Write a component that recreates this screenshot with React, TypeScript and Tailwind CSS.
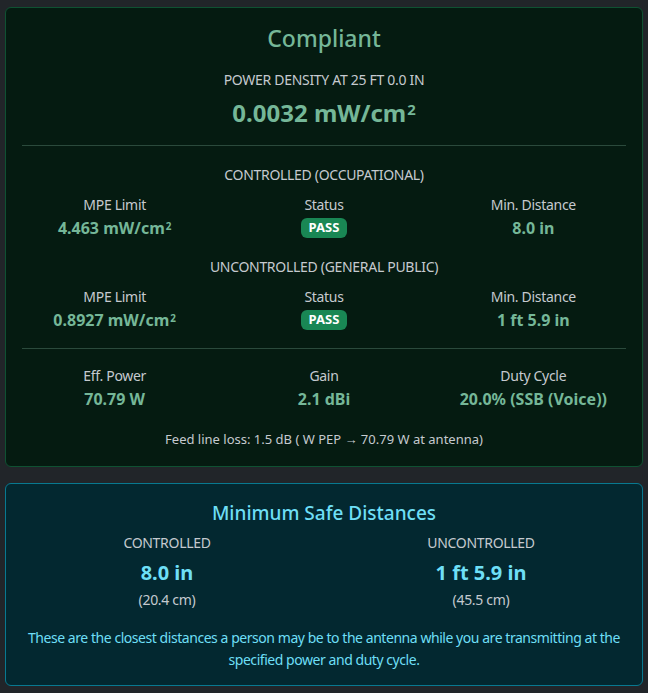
import React from "react";

const font = { fontFamily: '"Noto Sans", "Segoe UI", "Liberation Sans", sans-serif' };

const label = "text-[14px] tracking-[-0.3px] text-[#c5cacf]";

function Stat({ name, value }: { name: string; value: React.ReactNode }) {
  return (
    <div className="flex flex-col items-center px-3">
      <div className={`${label} leading-[22px]`}>{name}</div>
      <div className="text-[16px] leading-[24px] font-bold text-[#75b798]">{value}</div>
    </div>
  );
}

function Unit() {
  return (
    <>
      mW/cm<sup className="text-[0.62em] relative -top-[0.45em] align-baseline ml-[1px]">2</sup>
    </>
  );
}

function Pass() {
  return (
    <div className="flex flex-col items-center px-3">
      <div className={`${label} leading-[22px]`}>Status</div>
      <div className="h-[24px] flex items-center">
        <span className="inline-flex items-center rounded-[6px] bg-[#198754] px-[8px] h-[20px] text-[13px] font-bold text-white">
          PASS
        </span>
      </div>
    </div>
  );
}

export default function App() {
  return (
    <div className="min-h-[693px] bg-[#212529] px-[5px] pt-[7px] pb-[8px]" style={font}>
      {/* compliance result */}
      <div className="rounded-[6px] border border-[#0f5132] bg-[#051b11] px-4 pt-4 pb-[17px] text-center">
        <h4 className="text-[23px] leading-[29px] font-medium text-[#75b798]">Compliant</h4>
        <div className={`mt-[16px] ${label} leading-[21px] uppercase`}>Power density at 25 ft 0.0 in</div>
        <div className="mt-[8px] text-[24px] leading-[29px] font-bold text-[#75b798]">
          0.0032 <Unit />
        </div>
        <hr className="mt-[18px] border-t border-[#2b4a3c]" />

        <div className={`mt-[18px] ${label} leading-[21px] uppercase`}>Controlled (Occupational)</div>
        <div className="-mx-3 mt-[9px] grid grid-cols-3">
          <Stat name="MPE Limit" value={<>4.463 <Unit /></>} />
          <Pass />
          <Stat name="Min. Distance" value="8.0 in" />
        </div>

        <div className={`mt-[16px] ${label} leading-[21px] uppercase`}>Uncontrolled (General Public)</div>
        <div className="-mx-3 mt-[9px] grid grid-cols-3">
          <Stat name="MPE Limit" value={<>0.8927 <Unit /></>} />
          <Pass />
          <Stat name="Min. Distance" value="1 ft 5.9 in" />
        </div>

        <hr className="mt-[16px] border-t border-[#2b4a3c]" />

        <div className="-mx-3 mt-[16px] grid grid-cols-3">
          <Stat name="Eff. Power" value="70.79 W" />
          <Stat name="Gain" value="2.1 dBi" />
          <Stat name="Duty Cycle" value="20.0% (SSB (Voice))" />
        </div>

        <div className="mt-[18px] text-[13px] leading-[20px] text-[#c5cacf]">
          Feed line loss: 1.5 dB ( W PEP → 70.79 W at antenna)
        </div>
      </div>

      {/* minimum safe distances */}
      <div className="mt-[16px] rounded-[6px] border border-[#087990] bg-[#032830] px-4 pt-[17px] pb-[14px] text-center">
        <h5 className="text-[19px] leading-[24px] font-medium text-[#6edff6]">Minimum Safe Distances</h5>
        <div className="-mx-3 mt-[7px] grid grid-cols-2">
          <div className="flex flex-col items-center px-3">
            <div className={`${label} leading-[21px] uppercase`}>Controlled</div>
            <div className="mt-[8px] text-[20px] leading-[24px] font-bold text-[#6edff6]">8.0 in</div>
            <div className={`mt-[4px] ${label} leading-[21px]`}>(20.4 cm)</div>
          </div>
          <div className="flex flex-col items-center px-3">
            <div className={`${label} leading-[21px] uppercase`}>Uncontrolled</div>
            <div className="mt-[8px] text-[20px] leading-[24px] font-bold text-[#6edff6]">1 ft 5.9 in</div>
            <div className={`mt-[4px] ${label} leading-[21px]`}>(45.5 cm)</div>
          </div>
        </div>
        <p className="mt-[17px] text-[14px] tracking-[-0.45px] leading-[22px] text-[#6edff6]">
          These are the closest distances a person may be to the antenna while you are transmitting at the
          specified power and duty cycle.
        </p>
      </div>
    </div>
  );
}
